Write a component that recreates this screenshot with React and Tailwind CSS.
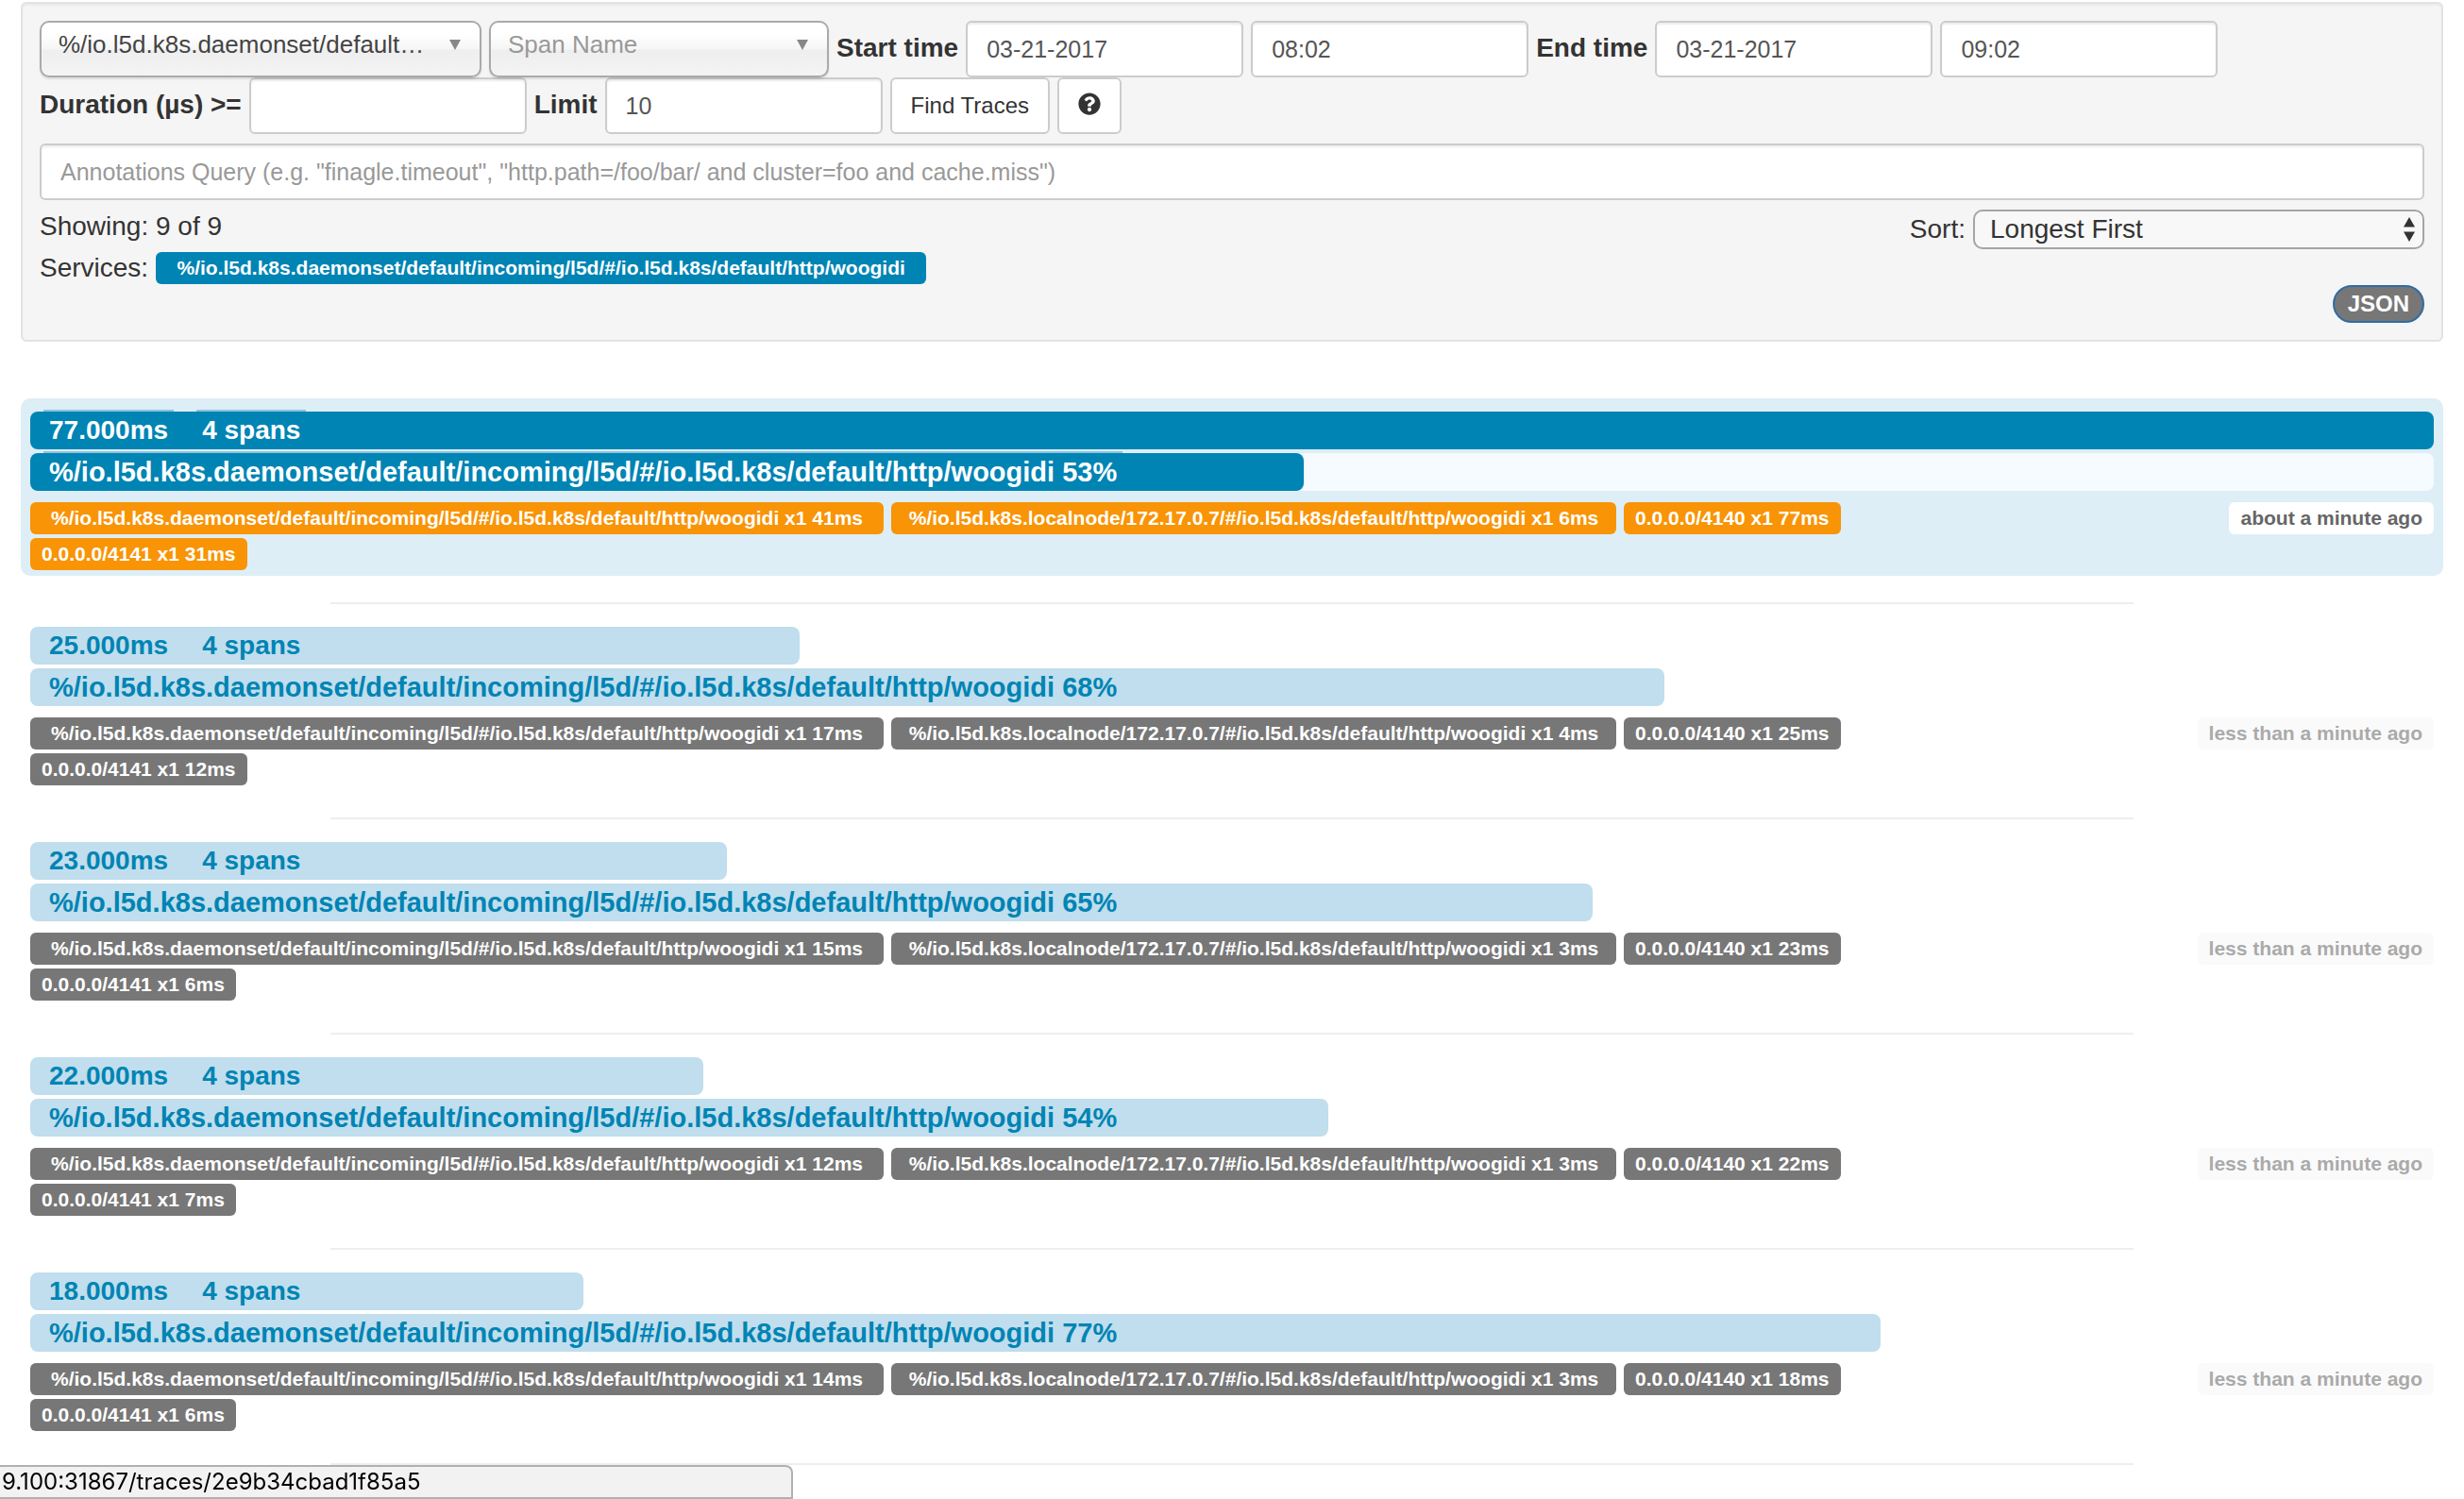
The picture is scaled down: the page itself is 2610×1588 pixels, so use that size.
import { FaQuestionCircle } from "react-icons/fa";

const SERVICE = "%/io.l5d.k8s.daemonset/default/incoming/l5d/#/io.l5d.k8s/default/http/woogidi";
const LOCAL = "%/io.l5d.k8s.localnode/172.17.0.7/#/io.l5d.k8s/default/http/woogidi";

const endpoints = [
  { name: SERVICE, size: "min-w-[904px]" },
  { name: LOCAL, size: "min-w-[768px]" },
  { name: "0.0.0.0/4140", size: "" },
  { name: "0.0.0.0/4141", size: "" },
];

const traces = [
  { ms: 77, width: 100, pct: 53, times: [41, 6, 77, 31], ago: "about a minute ago", active: true },
  { ms: 25, width: 32, pct: 68, times: [17, 4, 25, 12], ago: "less than a minute ago" },
  { ms: 23, width: 29, pct: 65, times: [15, 3, 23, 6], ago: "less than a minute ago" },
  { ms: 22, width: 28, pct: 54, times: [12, 3, 22, 7], ago: "less than a minute ago" },
  { ms: 18, width: 23, pct: 77, times: [14, 3, 18, 6], ago: "less than a minute ago" },
];

const fieldClass =
  "h-[60px] rounded-md border-2 border-[#ccc] bg-white px-5 text-[25px] text-[#555] shadow-[inset_0_2px_2px_rgba(0,0,0,0.075)] placeholder:text-[#999] placeholder:opacity-100";
const chosenClass =
  "h-[60px] w-full appearance-none rounded-[10px] border-2 border-[#aaa] bg-[linear-gradient(#fff_20%,#f6f6f6_50%,#eee_52%,#f4f4f4_100%)] pb-2.5 pl-[18px] pr-12 text-[26px] text-ellipsis shadow-[0_2px_2px_rgba(0,0,0,0.1)]";
const labelClass = "pb-0.5 font-bold";

function Chosen({ label, value, wrapClass, textClass }) {
  return (
    <div className={`relative ${wrapClass}`}>
      <select aria-label={label} className={`${chosenClass} ${textClass}`}>
        <option>{value}</option>
      </select>
      <svg className="pointer-events-none absolute right-[22px] top-5 h-[11px] w-3" viewBox="0 0 12 11">
        <path d="M0 0h12L6 11z" fill="#888" />
      </svg>
    </div>
  );
}

function Field({ label, value, id }) {
  return <input id={id} aria-label={label} defaultValue={value} className={`${fieldClass} w-[294px]`} />;
}

function SearchPanel() {
  return (
    <form className="rounded-md border-2 border-[#e3e3e3] bg-[#f5f5f5] p-[18px] shadow-[inset_0_2px_2px_rgba(0,0,0,0.05)]">
      <div className="flex flex-wrap items-center gap-x-2">
        <Chosen label="Service" value="%/io.l5d.k8s.daemonset/default…" wrapClass="w-[468px]" textClass="text-[#444]" />
        <Chosen label="Span name" value="Span Name" wrapClass="w-[360px]" textClass="text-[#999]" />
        <label htmlFor="start" className={labelClass}>Start time</label>
        <Field id="start" value="03-21-2017" />
        <Field label="Start hour" value="08:02" />
        <label htmlFor="end" className={labelClass}>End time</label>
        <Field id="end" value="03-21-2017" />
        <Field label="End hour" value="09:02" />
      </div>
      <div className="flex flex-wrap items-center gap-x-2">
        <label htmlFor="duration" className={labelClass}>Duration (µs) &gt;=</label>
        <Field id="duration" value="" />
        <label htmlFor="limit" className={labelClass}>Limit</label>
        <Field id="limit" value="10" />
        <button type="button" className="h-[60px] rounded-md border-2 border-[#ccc] bg-white px-5 text-[24px]">
          Find Traces
        </button>
        <button
          type="button"
          aria-label="Help"
          className="flex h-[60px] w-[68px] items-center justify-center rounded-md border-2 border-[#ccc] bg-white pb-1"
        >
          <FaQuestionCircle className="size-6" />
        </button>
      </div>
      <input
        aria-label="Annotations query"
        placeholder={'Annotations Query (e.g. "finagle.timeout", "http.path=/foo/bar/ and cluster=foo and cache.miss")'}
        className={`${fieldClass} mt-2.5 w-full`}
      />
      <div className="mt-2.5 flex items-start justify-between">
        <div>
          <div className="h-11 leading-9">Showing: 9 of 9</div>
          <div className="flex items-center gap-2 leading-9">
            Services:
            <span className="flex h-[34px] min-w-[816px] items-center justify-center rounded-md bg-[#0084b4] px-3 text-[21px] font-bold text-white">
              {SERVICE}
            </span>
          </div>
        </div>
        <div className="flex flex-col items-end gap-[38px]">
          <div className="flex items-center gap-2">
            <label htmlFor="sort">Sort:</label>
            <div className="relative w-[478px]">
              <select
                id="sort"
                className="block h-[42px] w-full appearance-none rounded-[10px] border-2 border-[#a5a5a5] bg-[#f8f8f8] px-4 leading-9"
              >
                <option>Longest First</option>
              </select>
              <svg className="pointer-events-none absolute right-2.5 top-2 h-[26px] w-3" viewBox="0 0 12 26">
                <path d="M6 0l6 10.5H0zM6 26l6-10.5H0z" fill="#333" />
              </svg>
            </div>
          </div>
          <button
            type="button"
            className="flex h-10 items-center rounded-full border-2 border-[#2e6da4] bg-[#777] px-3.5 text-[24px] font-bold text-white"
          >
            JSON
          </button>
        </div>
      </div>
    </form>
  );
}

function Trace({ ms, width, pct, times, ago, active }) {
  const track = active ? "bg-[#f5fbfe]" : "";
  const bar = active ? "bg-[#0084b4] text-white" : "bg-[#c0deed] text-[#0084b4]";
  const label = active ? "shadow-[0_-2px_0_#8cc4dd]" : "";
  const badge = active ? "bg-[#f89406]" : "bg-[#777]";
  return (
    <li className={`flex flex-col gap-1 rounded-[10px] px-2.5 pb-1.5 pt-3.5 ${active ? "bg-[#ddeef6]" : ""}`}>
      <div className={`h-10 rounded-lg ${track}`}>
        <div
          className={`flex h-10 items-center gap-6 whitespace-nowrap rounded-lg pl-3.5 font-bold ${bar}`}
          style={{ width: `${width}%` }}
        >
          <span className={`px-1.5 ${label}`}>{ms}.000ms</span>
          <span className={`px-1.5 ${label}`}>4 spans</span>
        </div>
      </div>
      <div className={`h-10 rounded-lg ${track}`}>
        <div
          className={`flex h-10 items-center whitespace-nowrap rounded-lg pl-3.5 text-[29px] font-bold ${bar}`}
          style={{ width: `${pct}%` }}
        >
          <span className={`px-1.5 ${label}`}>
            {SERVICE} {pct}%
          </span>
        </div>
      </div>
      <div className="mt-2 flex items-start justify-between text-[21px] font-bold">
        <div className="flex w-5/6 flex-wrap gap-x-2 gap-y-1">
          {endpoints.map(({ name, size }, i) => (
            <span
              key={name}
              className={`flex h-[34px] items-center justify-center rounded-md px-3 text-white ${size} ${badge}`}
            >
              {name} x1 {times[i]}ms
            </span>
          ))}
        </div>
        <span
          className={`flex h-[34px] items-center rounded-md px-3 ${
            active ? "bg-white text-[#666]" : "bg-[#fafafa] text-[#aaa]"
          }`}
        >
          {ago}
        </span>
      </div>
    </li>
  );
}

export default function App() {
  return (
    <main className="min-h-screen bg-white px-[22px] pt-0.5 font-['Liberation_Sans',Arial,sans-serif] text-[28px] leading-10 text-[#333]">
      <SearchPanel />
      <ul className="mt-[60px]">
        {traces.map((t) => (
          <div key={t.ms} className="contents">
            <Trace {...t} />
            <li aria-hidden="true" className="px-2.5 pb-2.5 pt-7">
              <div className="mx-auto h-0.5 w-3/4 bg-[#eee]" />
            </li>
          </div>
        ))}
      </ul>
      <div className="fixed bottom-0 left-0 flex h-9 w-[840px] items-center rounded-tr-lg border-2 border-l-0 border-[#b0b0b0] bg-[#f2f2f2] pl-0.5 font-['Inter',sans-serif] text-[24px] text-black">
        9.100:31867/traces/2e9b34cbad1f85a5
      </div>
    </main>
  );
}
